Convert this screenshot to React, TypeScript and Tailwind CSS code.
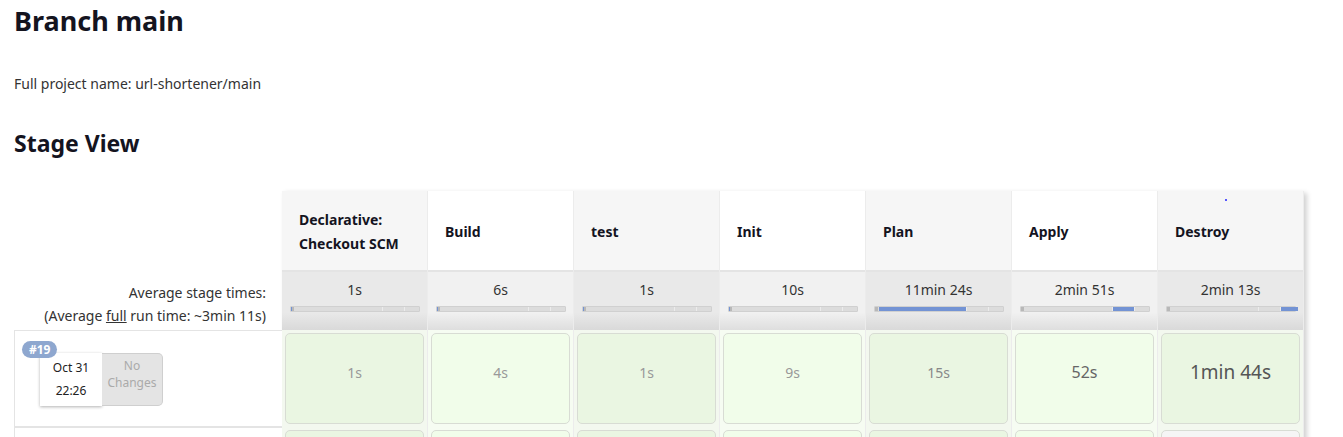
const stages = [
  { name: "Declarative: Checkout SCM", avg: "1s", fill: [0, 1], time: "1s", size: "text-[14px] text-[#999]" },
  { name: "Build", avg: "6s", fill: [0, 1], time: "4s", size: "text-[14px] text-[#999]" },
  { name: "test", avg: "1s", fill: [0, 1], time: "1s", size: "text-[14px] text-[#999]" },
  { name: "Init", avg: "10s", fill: [0, 1], time: "9s", size: "text-[14px] text-[#999]" },
  { name: "Plan", avg: "11min 24s", fill: [4, 87], time: "15s", size: "text-[14px] text-[#888]" },
  { name: "Apply", avg: "2min 51s", fill: [92, 21], time: "52s", size: "text-[16px] text-[#666]" },
  { name: "Destroy", avg: "2min 13s", fill: [114, 17], time: "1min 44s", size: "text-[19px] text-[#555]" },
];

function Bar({ fill }: { fill: number[] }) {
  return (
    <div className="relative mx-auto h-[6px] w-[130px] rounded-[1px] bg-[#dcdcdc] border border-[#d0d0d0]">
      <div className="absolute left-0 top-0 h-full w-[3px] bg-[#b8b8b8]" />
      <div className="absolute left-[91px] top-0 h-full w-px bg-[#ececec]" />
      <div className="absolute left-[113px] top-0 h-full w-px bg-[#ececec]" />
      <div
        className="absolute top-0 h-full bg-[#7393d4]"
        style={{ left: fill[0], width: fill[1] }}
      />
    </div>
  );
}

function RunLeft({ id, date, time }: { id?: string; date?: string; time?: string }) {
  return (
    <div className="relative h-full border-l border-y border-[#e4e4e4] bg-white">
      <span className="absolute left-[7px] top-[10px] z-10 min-w-[34px] h-[17px] rounded-full bg-[#8ea7cf] px-[7px] text-[12px] font-bold leading-[17px] text-white">
        {id}
      </span>
      {date && (
        <div className="ml-[25px] mt-[22px] flex">
          <div className="flex h-[53px] w-[62px] flex-col items-center justify-center gap-[7px] bg-white text-[12px] leading-[16px] text-[#222] shadow-[0_1px_3px_rgba(0,0,0,0.3)]">
            <span>{date}</span>
            <span>{time}</span>
          </div>
          <div className="flex h-[53px] w-[61px] flex-col items-center justify-start pt-[3px] rounded-r-[5px] border border-l-0 border-[#cfcfcf] bg-[#e4e4e4] text-[12px] leading-[17px] text-[#aaa]">
            <span>No</span>
            <span>Changes</span>
          </div>
        </div>
      )}
    </div>
  );
}

export default function App() {
  return (
    <div className="min-h-screen bg-white px-[14px] pt-[3px] font-['Noto_Sans',sans-serif] text-[#333]">
      <h1 className="text-[27px] font-bold leading-[36px] text-[#14141f]">Branch main</h1>
      <p className="mt-[35px] text-[14px] leading-[20px]">Full project name: url-shortener/main</p>
      <h2 className="mt-[33px] text-[23px] font-bold leading-[32px] text-[#14141f]">Stage View</h2>

      <div className="mt-[32px] flex">
        <div className="flex w-[268px] flex-col">
          <div className="h-[81px]" />
          <div className="flex h-[58px] flex-col justify-start pt-[9px] pr-[16px] text-right text-[14px] leading-[23px] text-[#333]">
            <span>Average stage times:</span>
            <span>
              (Average <span className="underline">full</span> run time: ~3min 11s)
            </span>
          </div>
          <div className="h-[97px]">
            <RunLeft id="#19" date="Oct 31" time="22:26" />
          </div>
          <div className="h-[97px]">
            <RunLeft />
          </div>
        </div>

        <div className="flex shadow-[3px_2px_5px_rgba(0,0,0,0.18)]">
          {stages.map((s, i) => {
            const odd = i % 2 === 0;
            return (
              <div key={s.name} className="flex w-[146px] flex-col border-r border-[#ececec]">
                <div
                  className={`relative flex h-[81px] items-center border-b-2 border-[#e4e4e4] pl-[17px] pr-[10px] pt-[3px] text-[14px] font-bold leading-[24px] text-[#14141f] ${
                    odd ? "bg-[#f6f6f6]" : "bg-white"
                  }`}
                >
                  {s.name}
                  {i === 6 && <span className="absolute left-[67px] top-[8px] h-[2px] w-[2px] rounded-full bg-[#2222ff]" />}
                </div>
                <div
                  className={`flex h-[58px] flex-col items-center pt-[7px] ${
                    odd
                      ? "bg-[linear-gradient(to_bottom,#e9e9e9_0%,#e9e9e9_70%,#d9d9d9_100%)]"
                      : "bg-[linear-gradient(to_bottom,#f1f1f1_0%,#f1f1f1_70%,#dedede_100%)]"
                  }`}
                >
                  <span className="text-[14px] leading-[22px] text-[#333]">{s.avg}</span>
                  <div className="mt-[5px]">
                    <Bar fill={s.fill} />
                  </div>
                </div>
                <div className={`h-[97px] p-[3px] ${odd ? "bg-[#f3f8ef]" : "bg-[#f6fcf2]"}`}>
                  <div
                    className={`flex h-full items-center justify-center pb-[13px] rounded-[5px] border border-[#d8dcd4] ${s.size} ${
                      odd ? "bg-[#eaf6e2]" : "bg-[#f1fdea]"
                    }`}
                  >
                    {s.time}
                  </div>
                </div>
                <div className={`h-[97px] p-[3px] ${odd ? "bg-[#f3f8ef]" : "bg-[#f6fcf2]"}`}>
                  <div
                    className={`h-full rounded-[5px] border border-[#d8dcd4] ${
                      i === 6 ? "bg-[#f5f5f5]" : odd ? "bg-[#eaf6e2]" : "bg-[#f1fdea]"
                    }`}
                  />
                </div>
              </div>
            );
          })}
        </div>
      </div>
    </div>
  );
}
